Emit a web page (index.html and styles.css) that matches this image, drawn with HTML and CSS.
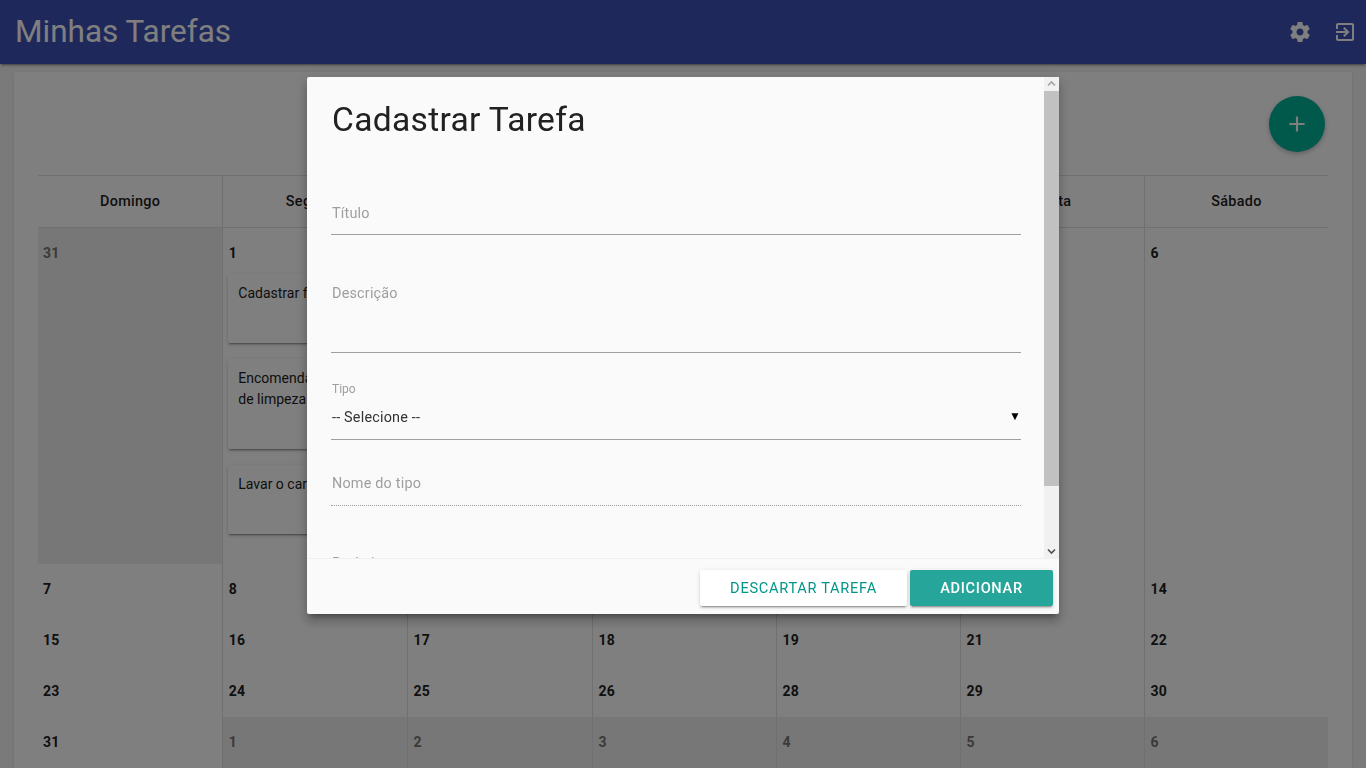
FILE: index.html
```html
<!DOCTYPE html>
<html lang="pt-BR">
<head>
<meta charset="utf-8">
<title>Minhas Tarefas</title>
<link rel="stylesheet" href="styles.css">
</head>
<body>
<header class="navbar">
  <h1 class="brand">Minhas Tarefas</h1>
  <div class="nav-icons">
    <svg class="nav-icon" viewBox="0 0 24 24"><path d="M19.43 12.98c.04-.32.07-.64.07-.98s-.03-.66-.07-.98l2.11-1.65c.19-.15.24-.42.12-.64l-2-3.46c-.12-.22-.39-.3-.61-.22l-2.49 1c-.52-.4-1.08-.73-1.69-.98l-.38-2.65C14.46 2.18 14.25 2 14 2h-4c-.25 0-.46.18-.49.42l-.38 2.65c-.61.25-1.17.59-1.69.98l-2.49-1c-.23-.09-.49 0-.61.22l-2 3.46c-.13.22-.07.49.12.64l2.11 1.65c-.04.32-.07.65-.07.98s.03.66.07.98l-2.11 1.65c-.19.15-.24.42-.12.64l2 3.46c.12.22.39.3.61.22l2.49-1c.52.4 1.08.73 1.69.98l.38 2.65c.03.24.24.42.49.42h4c.25 0 .46-.18.49-.42l.38-2.65c.61-.25 1.17-.59 1.69-.98l2.49 1c.23.09.49 0 .61-.22l2-3.46c.12-.22.07-.49-.12-.64l-2.11-1.65zM12 15.5c-1.93 0-3.5-1.57-3.5-3.5s1.57-3.5 3.5-3.5 3.5 1.57 3.5 3.5-1.57 3.5-3.5 3.5z"/></svg>
    <svg class="nav-icon" viewBox="0 0 24 24"><path d="M10.09 15.59L11.5 17l5-5-5-5-1.41 1.41L12.67 11H3v2h9.67l-2.58 2.59zM19 3H5c-1.11 0-2 .9-2 2v4h2V5h14v14H5v-4H3v4c0 1.1.89 2 2 2h14c1.1 0 2-.9 2-2V5c0-1.11-.9-2-2-2z"/></svg>
  </div>
</header>

<main class="page">
  <section class="card">
    <div class="toolbar">
      <button class="fab" type="button">
        <svg class="fab-icon" viewBox="0 0 24 24"><path d="M19 13h-6v6h-2v-6H5v-2h6V5h2v6h6v2z"/></svg>
      </button>
    </div>
    <div class="calendar">
      <div class="head">Domingo</div>
      <div class="head">Segunda</div>
      <div class="head">Terça</div>
      <div class="head">Quarta</div>
      <div class="head">Quinta</div>
      <div class="head">Sexta</div>
      <div class="head">Sábado</div>

      <div class="day other"><span class="num">31</span></div>
      <div class="day">
        <span class="num">1</span>
        <div class="event">Cadastrar funcionário</div>
        <div class="event tall">Encomendar produtos de limpeza</div>
        <div class="event">Lavar o carro</div>
      </div>
      <div class="day"><span class="num">2</span></div>
      <div class="day"><span class="num">3</span></div>
      <div class="day"><span class="num">4</span></div>
      <div class="day"><span class="num">5</span></div>
      <div class="day"><span class="num">6</span></div>

      <div class="day"><span class="num">7</span></div>
      <div class="day"><span class="num">8</span></div>
      <div class="day"><span class="num">9</span></div>
      <div class="day"><span class="num">10</span></div>
      <div class="day"><span class="num">11</span></div>
      <div class="day"><span class="num">12</span></div>
      <div class="day"><span class="num">14</span></div>

      <div class="day"><span class="num">15</span></div>
      <div class="day"><span class="num">16</span></div>
      <div class="day"><span class="num">17</span></div>
      <div class="day"><span class="num">18</span></div>
      <div class="day"><span class="num">19</span></div>
      <div class="day"><span class="num">21</span></div>
      <div class="day"><span class="num">22</span></div>

      <div class="day"><span class="num">23</span></div>
      <div class="day"><span class="num">24</span></div>
      <div class="day"><span class="num">25</span></div>
      <div class="day"><span class="num">26</span></div>
      <div class="day"><span class="num">28</span></div>
      <div class="day"><span class="num">29</span></div>
      <div class="day"><span class="num">30</span></div>

      <div class="day"><span class="num">31</span></div>
      <div class="day other"><span class="num">1</span></div>
      <div class="day other"><span class="num">2</span></div>
      <div class="day other"><span class="num">3</span></div>
      <div class="day other"><span class="num">4</span></div>
      <div class="day other"><span class="num">5</span></div>
      <div class="day other"><span class="num">6</span></div>
    </div>
  </section>
</main>

<div class="overlay"></div>

<div class="modal">
  <div class="modal-body">
    <div class="modal-content">
      <h2 class="modal-title">Cadastrar Tarefa</h2>
      <div class="field field-title"><span class="hint">Título</span></div>
      <div class="field field-desc"><span class="hint">Descrição</span></div>
      <div class="field field-type">
        <span class="small-label">Tipo</span>
        <div class="select-row"><span class="select-value">-- Selecione --</span><span class="caret">▼</span></div>
      </div>
      <div class="field field-name"><span class="hint">Nome do tipo</span></div>
      <div class="field field-period"><span class="hint">Período</span></div>
    </div>
    <div class="scrollbar">
      <svg class="scroll-arrow" viewBox="0 0 15 14"><path d="M4 8.5l3.5-3.5L11 8.5" fill="none" stroke="#a3a3a3" stroke-width="1.6"/></svg>
      <div class="scroll-track"><div class="scroll-thumb"></div></div>
      <svg class="scroll-arrow" viewBox="0 0 15 14"><path d="M4 5.5L7.5 9 11 5.5" fill="none" stroke="#505050" stroke-width="1.6"/></svg>
    </div>
  </div>
  <div class="modal-footer">
    <button class="btn btn-light" type="button">Descartar tarefa</button>
    <button class="btn btn-primary" type="button">Adicionar</button>
  </div>
</div>
</body>
</html>
```

FILE: styles.css
```css
* { box-sizing: border-box; }

html, body { height: 100%; }

body {
  margin: 0;
  overflow: hidden;
  background: #f5f5f5;
  font-family: Roboto, "Liberation Sans", sans-serif;
  color: #212121;
}

.navbar {
  height: 64px;
  display: flex;
  align-items: center;
  justify-content: space-between;
  padding: 0 9px 0 15px;
  background: #3f51b5;
  color: #fff;
  box-shadow: 0 2px 2px 0 rgba(0,0,0,.14), 0 1px 5px 0 rgba(0,0,0,.12), 0 3px 1px -2px rgba(0,0,0,.2);
  position: relative;
}

.brand { margin: 0; font-size: 31.5px; font-weight: 400; line-height: 63px; height: 64px; }

.nav-icons { display: flex; gap: 21px; }

.nav-icon { width: 24px; height: 24px; fill: #fff; display: block; }

.page { padding: 8px 14px 0; }

.card {
  background: #fff;
  padding: 24px 24px 0;
  box-shadow: 0 1px 3px rgba(0,0,0,.12);
}

.toolbar {
  display: flex;
  justify-content: flex-end;
  padding-right: 3px;
  margin-bottom: 23px;
}

.fab {
  width: 56px;
  height: 56px;
  padding: 0 1px 1px 0;
  border: 0;
  border-radius: 50%;
  background: #00b296;
  display: flex;
  align-items: center;
  justify-content: center;
  box-shadow: 0 2px 5px rgba(0,0,0,.26);
}

.fab-icon { width: 26px; height: 26px; fill: #fff; }

.calendar {
  display: grid;
  grid-template-columns: 184.3px 184.7px 185px 184px 184px 184px 184px;
  border-top: 1px solid #e0e0e0;
}

.head {
  height: 52px;
  line-height: 52px;
  text-align: center;
  font-size: 14.4px;
  font-weight: 500;
  letter-spacing: .3px;
  border-bottom: 1px solid #e0e0e0;
  border-left: 1px solid #e0e0e0;
}

.head:nth-child(7n+1), .day:nth-child(7n+1) { border-left: 0; }

.day {
  padding: 15px 5px 16px 5.5px;
  border-left: 1px solid #e0e0e0;
  min-width: 0;
}

.day:nth-child(7n+1) { padding-left: 5px; }

.day.other { background: #eee; }

.day.other .num { color: #757575; }

.num {
  display: block;
  font-size: 14px;
  font-weight: 700;
  line-height: 20px;
  letter-spacing: .2px;
}

.event {
  height: 69px;
  margin: 16px 0 0 -.5px;
  padding: 9px 10px 0;
  background: #fff;
  font-size: 14px;
  line-height: 21px;
  border-radius: 2px;
  box-shadow: 0 2px 2px 0 rgba(0,0,0,.14), 0 1px 5px 0 rgba(0,0,0,.12), 0 3px 1px -2px rgba(0,0,0,.2);
}

.event:first-of-type { margin-top: 11px; }

.event.tall { height: 90px; }

.event:last-child { margin-bottom: 14px; }

.overlay {
  position: fixed;
  inset: 0;
  background: rgba(0,0,0,.5);
}

.modal {
  position: fixed;
  left: 307px;
  top: 77px;
  width: 752px;
  height: 537px;
  display: flex;
  flex-direction: column;
  background: #fafafa;
  border-radius: 2px;
  box-shadow: 0 8px 10px 1px rgba(0,0,0,.14), 0 3px 14px 2px rgba(0,0,0,.12), 0 5px 5px -3px rgba(0,0,0,.3);
}

.modal-body {
  flex: 1;
  min-height: 0;
  display: flex;
}

.modal-content {
  flex: 1;
  min-width: 0;
  overflow: hidden;
  padding: 24px 23px 24px 24px;
}

.scrollbar {
  flex: none;
  width: 15px;
  display: flex;
  flex-direction: column;
  background: #f1f1f1;
}

.scroll-arrow { flex: none; width: 15px; height: 14px; display: block; }

.scroll-track { flex: 1; min-height: 0; }

.scroll-thumb { height: 395px; background: #c1c1c1; }

.modal-title {
  margin: 0;
  padding: 1px 0 0 1px;
  height: 36px;
  font-size: 33.6px;
  font-weight: 400;
  line-height: 36px;
  letter-spacing: .3px;
}

.field { border-bottom: 1px solid #9e9e9e; }

.hint {
  display: block;
  padding: 1px 0 0 1px;
  font-size: 14.4px;
  line-height: 32px;
  letter-spacing: .2px;
  color: #9e9e9e;
}

.field-title { margin-top: 60px; height: 38px; }
.field-desc { margin-top: 42px; height: 76px; }
.field-type { margin-top: 29px; height: 58px; }
.field-name { margin-top: 27px; height: 39px; border-bottom: 1px dotted #9e9e9e; }
.field-period { margin-top: 41px; height: 58px; border-bottom: 0; }

.small-label {
  display: block;
  padding-left: 1px;
  font-size: 12px;
  line-height: 14px;
  color: #9e9e9e;
}

.select-row {
  display: flex;
  justify-content: space-between;
  align-items: center;
  height: 32px;
  margin-top: 5px;
}

.select-value { padding-left: 1px; font-size: 14.4px; letter-spacing: .2px; color: #333; }

.caret { font-size: 12px; line-height: 12px; color: #000; margin-top: -3px; }

.modal-footer {
  flex: none;
  height: 56px;
  display: flex;
  justify-content: flex-end;
  gap: 3px;
  padding: 11px 6px 0 0;
  border-top: 1px solid #f0f0f0;
}

.btn {
  height: 36px;
  border: 0;
  border-radius: 2px;
  font-family: inherit;
  font-size: 14.6px;
  text-transform: uppercase;
  box-shadow: 0 2px 2px 0 rgba(0,0,0,.14), 0 1px 5px 0 rgba(0,0,0,.12), 0 3px 1px -2px rgba(0,0,0,.2);
}

.btn-light { width: 207px; background: #fff; color: #009688; letter-spacing: .72px; }

.btn-primary { width: 143px; background: #26a69a; color: #fff; font-weight: 500; letter-spacing: .68px; }
```
